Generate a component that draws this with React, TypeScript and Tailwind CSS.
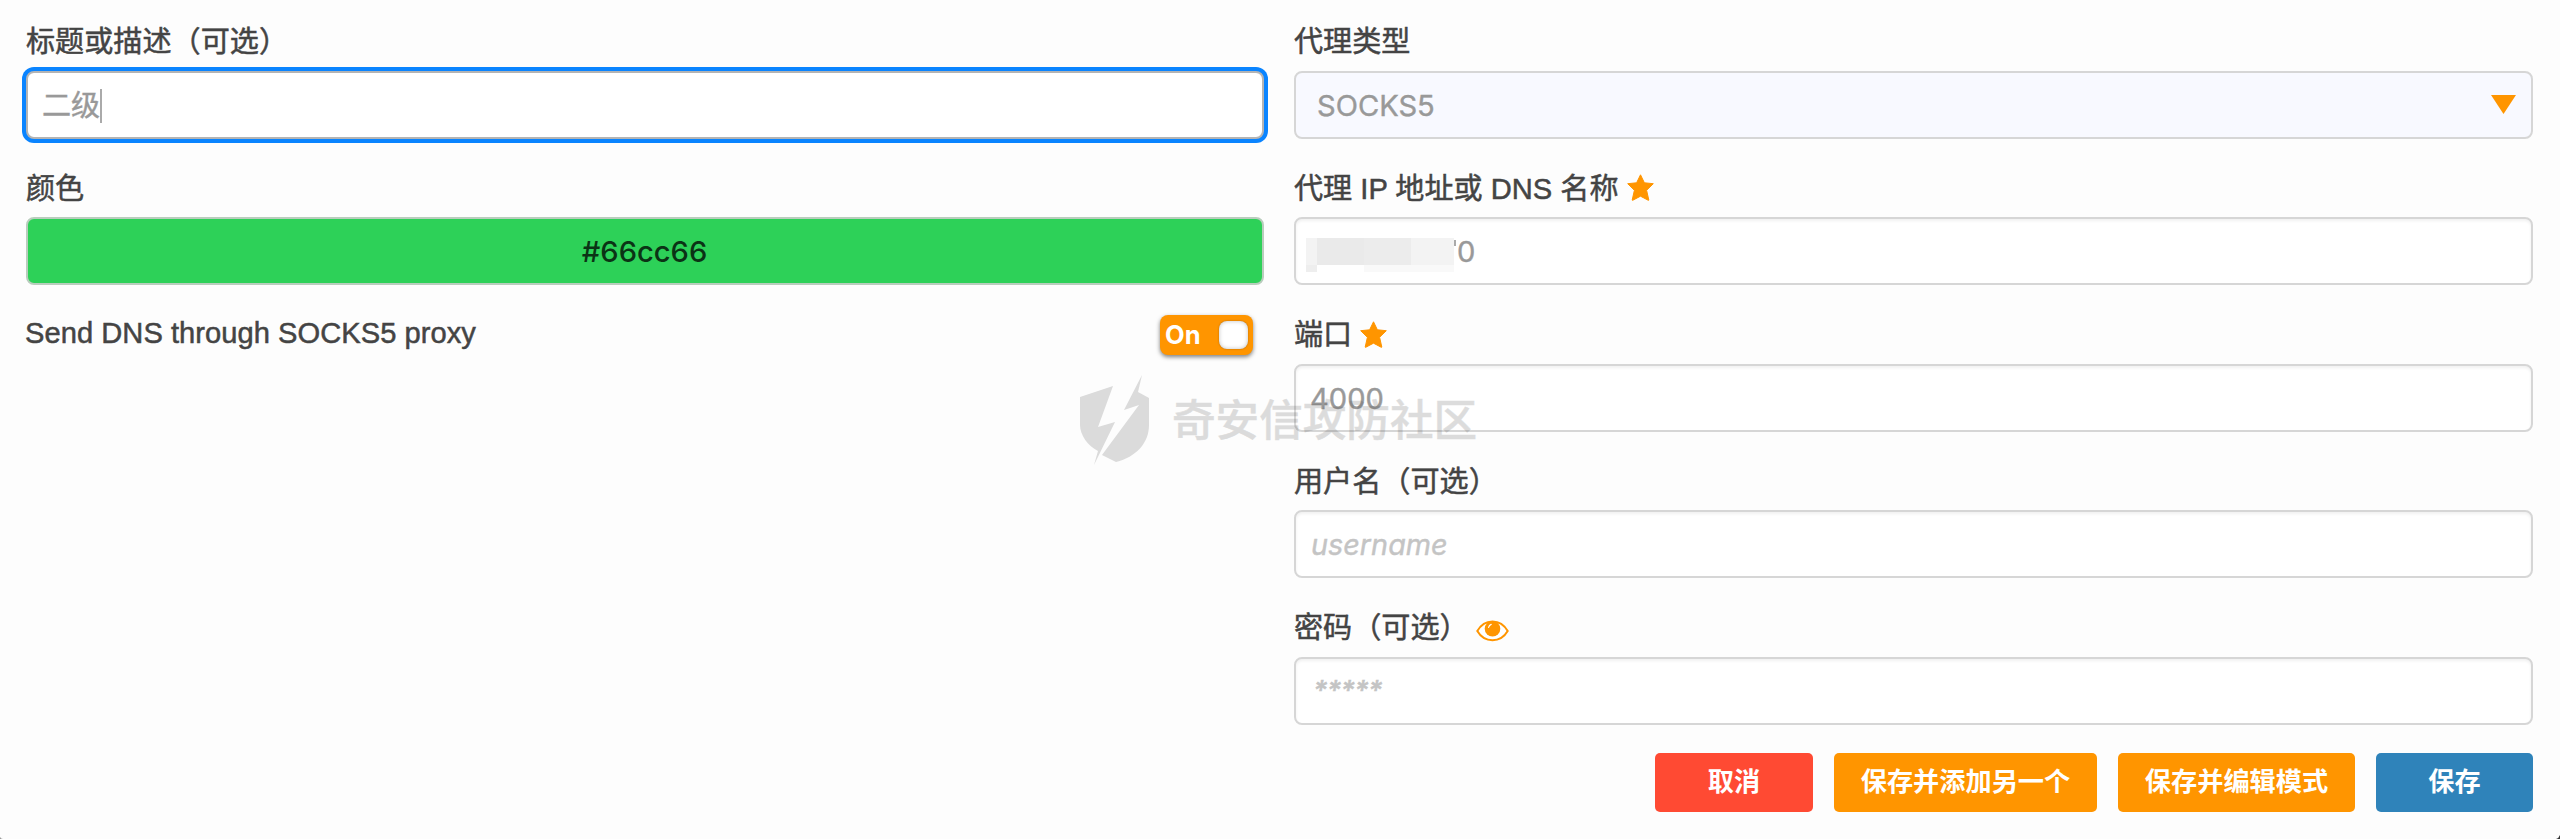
import type { ReactNode } from "react";

function Star() {
  return (
    <svg className="mb-[3px] ml-[8px] h-[27px] w-[27px] shrink-0" viewBox="0 0 27 27" fill="#ff9500" stroke="#ff9500" strokeWidth="1">
      <path d="M13.500.800l3.900 8 8.900.900-6.700 6.600 2.200 9.700q.1.500-.7.200l-7.600-4-7.600 4q-.8.300-.7-.2l2.200-9.700L.700 9.700l8.900-.9z" />
    </svg>
  );
}

function Eye() {
  return (
    <svg className="mt-[4px] ml-[7px] h-[22px] w-[33px] shrink-0" viewBox="0 0 33 22">
      <path d="M1.300 11C8.500-1.800 24.500-1.800 31.700 11 24.500 23.300 8.500 23.300 1.300 11z" fill="#fff" stroke="#ff9500" strokeWidth="2" />
      <circle cx="16.500" cy="8.800" r="7.800" fill="#ff9500" />
      <path d="M12.600 7.400a4.400 4.400 0 0 1 2.600-3" fill="none" stroke="#fff" strokeWidth="1.200" strokeLinecap="round" />
    </svg>
  );
}

function Label({ children }: { children: ReactNode }) {
  return (
    <div className="flex h-[57.500px] items-center whitespace-pre pt-[2px] text-[29.120px] leading-none text-[#444] [-webkit-text-stroke:0.500px_#444]">
      {children}
    </div>
  );
}

const box =
  "flex h-[68px] w-full items-center rounded-[8px] border-2 border-[#d6d6d6] pt-[2px] font-[Inter,'Noto_Sans_CJK_SC',sans-serif] text-[29.100px] leading-none text-[#999] [-webkit-text-stroke:0.400px_currentColor]";

function Field({ label, children }: { label: ReactNode; children: ReactNode }) {
  return (
    <div className="h-[146.500px]">
      <Label>{label}</Label>
      {children}
    </div>
  );
}

function Button({ className, children }: { className: string; children: ReactNode }) {
  return (
    <button
      className={`flex h-[59px] items-center justify-center rounded-[5px] pt-px text-[26.200px] leading-none font-bold text-white ${className}`}
    >
      {children}
    </button>
  );
}

export default function App() {
  return (
    <div className="relative h-[839px] w-[2560px] overflow-hidden bg-[#fdfdfd] pt-[13px] pr-[27px] pl-[26px] font-['Liberation_Sans','Noto_Sans_CJK_SC',sans-serif]">
      <div className="flex gap-[30px]">
        <div className="w-[1238px]">
          <Field label="标题或描述（可选）">
            <div className={`${box} border-[#b4b4b4]! bg-white pl-[14px] shadow-[0_0_0_4px_#0a84ff]`}>
              <span>二级</span>
              <span className="h-[34px] w-[2px] bg-[#aaa]" />
            </div>
          </Field>
          <Field label="颜色">
            <div className={`${box} justify-center border-[#b9cdbd]! bg-[#2dd158] pr-px font-medium text-[#0b3315]! [-webkit-text-stroke:0px]!`}>
              <span>#66cc66</span>
            </div>
          </Field>
          <div className="flex items-start justify-between pr-[11px]">
            <div className="-mt-[2px] -ml-px tracking-[0.040px]">
              <Label>Send DNS through SOCKS5 proxy</Label>
            </div>
            <div className="mt-[9px] flex h-[40px] w-[93px] items-center justify-between rounded-[8px] bg-[#ff9500] px-[5px] shadow-[0_2px_4px_rgba(0,0,0,0.500)]">
              <span className="font-[Inter,sans-serif] text-[25.500px] leading-none font-bold text-white">On</span>
              <span className="h-[28px] w-[29px] rounded-[8px] bg-white shadow-[inset_0_0_4px_rgba(0,0,0,0.250),0_0_2px_rgba(0,0,0,0.300)]" />
            </div>
          </div>
        </div>
        <div className="w-[1239px]">
          <Field label="代理类型">
            <div className={`${box} justify-between bg-[#f8f9ff] pr-[15px] pl-[21px]`}>
              <span>SOCKS5</span>
              <svg className="mb-[2px] h-[19px] w-[25px]" viewBox="0 0 25 19" fill="#ff9500">
                <path d="M0 0h25L12.500 19z" />
              </svg>
            </div>
          </Field>
          <Field label={<>代理 IP 地址或 DNS 名称<Star /></>}>
            <div className={`${box} bg-white pl-[10px] shadow-[inset_0_2px_3px_rgba(0,0,0,0.060)]`}>
              <div className="mt-[5px] flex h-[34px] w-[148px] items-start">
                <div className="w-[11px]">
                  <div className="h-[27px] bg-[#f3f3f3]" />
                  <div className="h-[7px] bg-[#eee]" />
                </div>
                <div className="h-[27px] w-[47px] bg-[#eaeaea]" />
                <div className="w-[47px]">
                  <div className="h-[27px] bg-[#ececec]" />
                  <div className="h-[7px] bg-[#f9f9f9]" />
                </div>
                <div className="w-[43px]">
                  <div className="h-[27px] bg-[#f3f3f3]" />
                  <div className="h-[7px] bg-[#f9f9f9]" />
                </div>
              </div>
              <span className="mb-[18px] h-[6px] w-[2px] bg-[#aaa]" />
              <span className="ml-px">0</span>
            </div>
          </Field>
          <Field label={<>端口<Star /></>}>
            <div className={`${box} bg-white pl-[14px] shadow-[inset_0_2px_3px_rgba(0,0,0,0.060)]`}>4000</div>
          </Field>
          <Field label="用户名（可选）">
            <div className={`${box} bg-white pl-[15px] text-[28.800px]! text-[#c4c4c4]! italic shadow-[inset_0_2px_3px_rgba(0,0,0,0.060)]`}>username</div>
          </Field>
          <Field label={<>密码（可选）<Eye /></>}>
            <div className={`${box} bg-white pl-[17px] text-[27px]! font-semibold text-[#c4c4c4]! italic shadow-[inset_0_2px_3px_rgba(0,0,0,0.060)]`}>
              <span className="-mt-[3px] tracking-[-0.800px]">*****</span>
            </div>
          </Field>
        </div>
      </div>
      <div className="mt-[7px] flex justify-end gap-[21px]">
        <Button className="w-[158px] bg-[#ff4a33]">取消</Button>
        <Button className="w-[263px] bg-[#ff9500]">保存并添加另一个</Button>
        <Button className="w-[237px] bg-[#ff9500]">保存并编辑模式</Button>
        <Button className="w-[157px] bg-[#2f83ba]">保存</Button>
      </div>
      <div className="absolute top-[375px] left-[1080px] flex items-start opacity-[0.180]">
        <svg className="h-[90px] w-[70px]" viewBox="0 0 70 90" fill="#444">
          <path d="M0 22L33 11 18 52l17-5L14 90l4-14C8 71 0 60 0 50zM62 0L58 17l11 6v27c0 18-13 32-33 37l-14-7L59 30l-15 5z" />
        </svg>
        <span className="mt-[25px] ml-[22px] text-[43.600px] leading-none font-medium whitespace-nowrap text-[#444] [-webkit-text-stroke:0.500px_#444]">奇安信攻防社区</span>
      </div>
      <svg className="absolute right-0 bottom-0 h-[4px] w-[4px]" viewBox="0 0 4 4" fill="#333">
        <path d="M4 0v4H0q3-1 4-4z" />
      </svg>
      <svg className="absolute bottom-0 left-0 h-[2px] w-[3px]" viewBox="0 0 3 2" fill="#999">
        <path d="M0 0q1 2 3 2H0z" />
      </svg>
    </div>
  );
}
